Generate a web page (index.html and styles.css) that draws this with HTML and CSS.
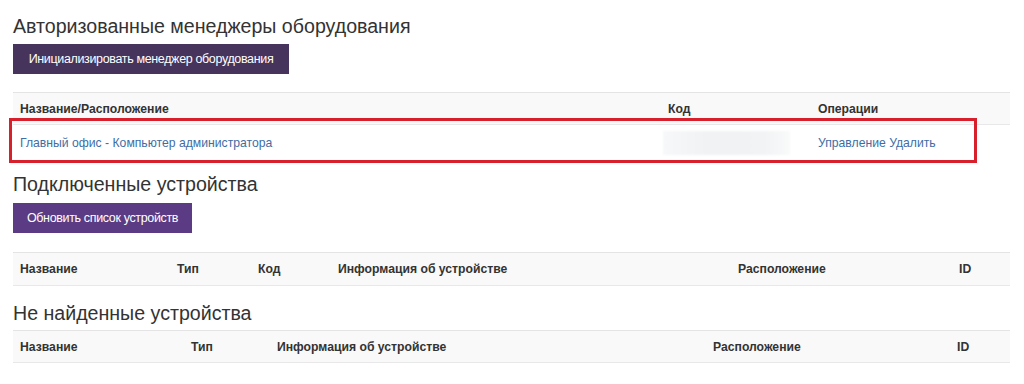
FILE: index.html
```html
<!DOCTYPE html>
<html lang="ru">

<head>
    <meta charset="UTF-8">
    <meta name="viewport" content="width=device-width, initial-scale=1.0">
    <title>Оборудование</title>
    <link rel="stylesheet" href="styles.css">
</head>

<body>
    <div class="page">
        <!-- авторизованные менеджеры -->
        <h2 class="title title-first">Авторизованные менеджеры оборудования</h2>
        <button type="button" class="btn btn-dark">Инициализировать менеджер оборудования</button>
        <div class="table-wrap">
            <table class="table">
                <thead>
                    <tr>
                        <th class="c-name">Название/Расположение</th>
                        <th class="c-code">Код</th>
                        <th>Операции</th>
                    </tr>
                </thead>
                <tbody>
                    <tr>
                        <td><a href="#">Главный офис - Компьютер администратора</a></td>
                        <td><span class="blur-code"></span></td>
                        <td><a href="#">Управление</a> <a href="#">Удалить</a></td>
                    </tr>
                </tbody>
            </table>
            <div class="highlight"></div>
        </div>

        <!-- подключенные устройства -->
        <h2 class="title title-second">Подключенные устройства</h2>
        <button type="button" class="btn btn-violet">Обновить список устройств</button>
        <table class="table table-devices">
            <thead>
                <tr>
                    <th class="d-name">Название</th>
                    <th class="d-type">Тип</th>
                    <th class="d-code">Код</th>
                    <th class="d-info">Информация об устройстве</th>
                    <th class="d-place">Расположение</th>
                    <th>ID</th>
                </tr>
            </thead>
        </table>

        <!-- не найденные -->
        <h2 class="title title-third">Не найденные устройства</h2>
        <table class="table table-missing">
            <thead>
                <tr>
                    <th class="m-name">Название</th>
                    <th class="m-type">Тип</th>
                    <th class="m-info">Информация об устройстве</th>
                    <th class="m-place">Расположение</th>
                    <th>ID</th>
                </tr>
            </thead>
        </table>
    </div>
</body>

</html>
```

FILE: styles.css
```css
html,
body {
    margin: 0;
    padding: 0;
    background: #fff;
}

body {
    font-family: "Liberation Sans", Arial, sans-serif;
    color: #333;
}

.page {
    width: 997px;
    padding-left: 13px;
}

/* заголовки */
.title {
    margin: 0;
    font-size: 19.6px;
    line-height: 24px;
    font-weight: normal;
    color: #333;
}

.title-first {
    padding-top: 14px;
    margin-bottom: 6px;
}

.title-second {
    margin-top: 12px;
    margin-bottom: 7px;
}

.title-third {
    margin-top: 15px;
    margin-bottom: 5px;
}

/* кнопки */
.btn {
    display: block;
    height: 30px;
    padding: 0;
    border: none;
    font-family: "Liberation Sans", Arial, sans-serif;
    font-size: 12.5px;
    letter-spacing: -0.35px;
    white-space: nowrap;
    text-align: center;
    color: #fff;
    cursor: pointer;
}

.btn-dark {
    width: 276px;
    background: #46345c;
}

.btn-violet {
    width: 179px;
    background: #5b3c84;
}

/* таблицы */
.table-wrap {
    position: relative;
    margin-top: 18px;
}

.table {
    width: 997px;
    border-collapse: collapse;
    font-size: 12.2px;
}

.table th {
    height: 31px;
    padding: 0 7px;
    text-align: left;
    font-weight: bold;
    color: #333;
    background: #f9f9f9;
    border-top: 1px solid #e4e4e4;
    border-bottom: 1px solid #e8e8e8;
}

.table td {
    height: 35px;
    padding: 0 7px;
    vertical-align: middle;
}

.table a {
    color: #3d6ea5;
    text-decoration: none;
}

.c-name {
    width: 634px;
}

.c-code {
    width: 136px;
}

.blur-code {
    display: block;
    width: 127px;
    height: 24px;
    margin-left: -5px;
    background: linear-gradient(90deg, #f7f8f9, #f0f2f4 35%, #f1f3f5 80%, #f9fafa);
    filter: blur(1px);
}

/* красная рамка поверх строки */
.highlight {
    position: absolute;
    left: -4px;
    top: 26px;
    width: 962px;
    height: 39px;
    border: 3px solid #d7202b;
}

.table-devices {
    margin-top: 19px;
}

.table-devices th {
    height: 32px;
}

.d-name {
    width: 143px;
}

.d-type {
    width: 67px;
}

.d-code {
    width: 66px;
}

.d-info {
    width: 386px;
}

.d-place {
    width: 207px;
}

.m-name {
    width: 157px;
}

.m-type {
    width: 72px;
}

.m-info {
    width: 422px;
}

.m-place {
    width: 230px;
}
```
